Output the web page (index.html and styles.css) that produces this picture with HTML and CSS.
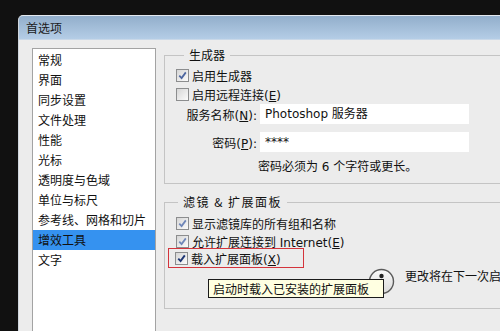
FILE: index.html
```html
<!DOCTYPE html>
<html lang="zh-CN">
<head>
  <meta charset="UTF-8" />
  <title>首选项</title>
  <link rel="stylesheet" href="styles.css">
</head>
<body>

<div class="window">
  <div class="titlebar">首选项</div>

  <div class="content">
    <ul class="nav">
      <li>常规</li>
      <li>界面</li>
      <li>同步设置</li>
      <li>文件处理</li>
      <li>性能</li>
      <li>光标</li>
      <li>透明度与色域</li>
      <li>单位与标尺</li>
      <li>参考线、网格和切片</li>
      <li class="selected">增效工具</li>
      <li>文字</li>
    </ul>

    <div class="panel">
      <fieldset class="group">
        <legend>生成器</legend>
        <div class="check first">
          <span class="box"><svg viewBox="0 0 12 12"><path d="M2.5 6.2 L5 8.8 L9.6 2.6" /></svg></span>
          <span>启用生成器</span>
        </div>
        <div class="check">
          <span class="box"></span>
          <span>启用远程连接(<u>E</u>)</span>
        </div>
        <div class="field">
          <span class="field-label">服务名称(<u>N</u>):</span>
          <span class="input">Photoshop 服务器</span>
        </div>
        <div class="field">
          <span class="field-label">密码(<u>P</u>):</span>
          <span class="input">****</span>
        </div>
        <p class="hint">密码必须为 6 个字符或更长。</p>
      </fieldset>

      <fieldset class="group filters">
        <legend>滤镜 &amp; 扩展面板</legend>
        <div class="check first dim">
          <span class="box"><svg viewBox="0 0 12 12"><path d="M2.5 6.2 L5 8.8 L9.6 2.6" /></svg></span>
          <span>显示滤镜库的所有组和名称</span>
        </div>
        <div class="check dim">
          <span class="box"><svg viewBox="0 0 12 12"><path d="M2.5 6.2 L5 8.8 L9.6 2.6" /></svg></span>
          <span>允许扩展连接到 Internet(<u>E</u>)</span>
        </div>
        <div class="check marked">
          <span class="box"><svg viewBox="0 0 12 12"><path d="M2.5 6.2 L5 8.8 L9.6 2.6" /></svg></span>
          <span>载入扩展面板(<u>X</u>)</span>
        </div>
        <div class="info">
          <svg class="info-icon" viewBox="0 0 27 27">
            <defs>
              <linearGradient id="ring" x1="0" y1="0" x2="0" y2="1">
                <stop offset="0" stop-color="#fafafa" />
                <stop offset="1" stop-color="#d9d9d9" />
              </linearGradient>
            </defs>
            <circle cx="13.5" cy="13.5" r="12" fill="url(#ring)" stroke="#5a5a5a" stroke-width="1.4" />
            <circle cx="13.5" cy="8" r="2.2" fill="#222" />
            <rect x="11.8" y="11" width="3.4" height="10" rx="1" fill="#222" />
          </svg>
          <span class="info-text">更改将在下一次启动 Photoshop 时生效。</span>
        </div>
        <div class="tooltip">启动时载入已安装的扩展面板</div>
      </fieldset>
    </div>
  </div>
</div>

</body>
</html>
```

FILE: styles.css
```css
html, body {
  margin: 0;
  height: 331px;
  overflow: hidden;
}
body {
  background: #111;
  font-family: "DejaVu Sans", "Noto Sans CJK SC", sans-serif;
  font-size: 12px;
  color: #111;
}
.window {
  margin: 15px 0 0 18px;
  width: 520px;
  height: 330px;
  border-top: 1px solid #e4e9ef;
  border-left: 1px solid #cfd6de;
  border-radius: 5px 0 0 0;
  background: #ececec;
  overflow: hidden;
}
.titlebar {
  height: 23px;
  line-height: 23px;
  padding-left: 7px;
  background: linear-gradient(#92aecb, #b4cde6);
  border-bottom: 1px solid #c9d8e8;
  color: #1b1b1b;
  font-family: "Noto Sans CJK SC", sans-serif;
}
.content {
  display: flex;
  padding: 8px 0 0 13px;
}
.nav {
  flex: none;
  list-style: none;
  margin: 0;
  padding: 1px 0 0 0;
  width: 122px;
  height: 300px;
  background: #fff;
  border: 1px solid #a3a3a3;
  font-family: "Noto Sans CJK SC", sans-serif;
}
.nav li {
  height: 20px;
  line-height: 20px;
  padding-left: 5px;
  white-space: nowrap;
}
.nav li.selected {
  background: #3592f0;
}
.panel {
  flex: none;
  margin-left: 8px;
}
.group {
  position: relative;
  margin: 0;
  padding: 0 0 7px 11px;
  width: 380px;
  border: 1px solid #c4c4c4;
}
.group legend {
  margin-left: 8px;
  padding: 0 5px;
  line-height: 14px;
  font-family: "Noto Sans CJK SC", sans-serif;
}
.filters {
  margin-top: 11px;
  padding-bottom: 13px;
}
.filters legend {
  margin-left: 2px;
  letter-spacing: 1.5px;
}
.check {
  display: flex;
  align-items: center;
  gap: 3px;
  height: 19px;
  white-space: nowrap;
}
.check.first {
  margin-top: 4px;
}
.filters .check {
  height: 18px;
}
.filters .check.first {
  margin-top: 5px;
}
.box {
  display: block;
  width: 11px;
  height: 11px;
  border: 1px solid #8c8d8e;
  background: linear-gradient(135deg, #d6d6d6, #fbfbfb);
}
.box svg {
  display: block;
  width: 11px;
  height: 11px;
}
.box path {
  fill: none;
  stroke: #4d66a0;
  stroke-width: 1.9;
}
.dim .box path {
  stroke: #6f86b8;
}
.check.marked {
  margin: -2px 0 0 -8px;
  padding-left: 6px;
  width: 128px;
  height: 18px;
  border: 1px solid #d4343c;
}
.marked .box path {
  stroke: #1f3775;
  stroke-width: 2.1;
}
.field {
  display: flex;
  align-items: center;
  height: 20px;
}
.field + .field {
  margin-top: 8px;
}
.field-label {
  width: 72px;
  margin: 0 3px 0 9px;
  text-align: right;
  white-space: nowrap;
}
.input {
  width: 204px;
  height: 20px;
  line-height: 20px;
  padding-left: 5px;
  background: #fff;
  white-space: nowrap;
}
.hint {
  margin: 6px 0 0 82px;
  line-height: 18px;
}
.info {
  display: flex;
  align-items: flex-start;
  margin: 0 0 0 192px;
}
.info-icon {
  width: 27px;
  height: 27px;
}
.info-text {
  margin: 0 0 0 10px;
  line-height: 18px;
  white-space: nowrap;
}
.tooltip {
  position: absolute;
  left: 43px;
  top: 70px;
  box-sizing: border-box;
  width: 176px;
  height: 19px;
  padding-left: 4px;
  line-height: 17px;
  border: 1px solid #1a1a1a;
  background: #ffffe1;
  font-family: "Noto Sans CJK SC", sans-serif;
  white-space: nowrap;
}
```
